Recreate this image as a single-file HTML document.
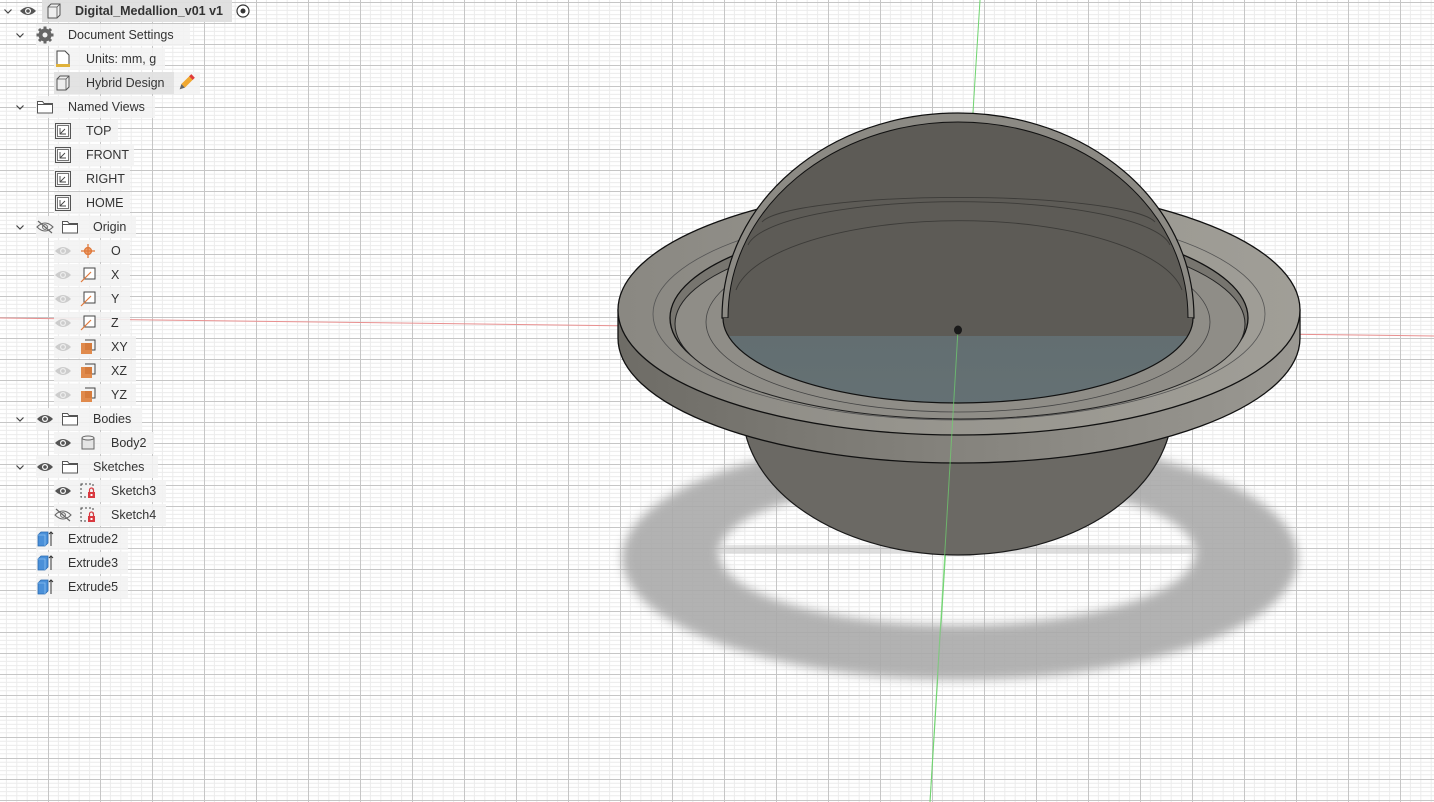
<!DOCTYPE html>
<html><head><meta charset="utf-8"><style>
html,body{margin:0;padding:0;width:1434px;height:802px;overflow:hidden;background:#fff;font-family:"Liberation Sans","DejaVu Sans",sans-serif}
#vp{position:absolute;left:0;top:0}
.r{position:absolute;height:22px;line-height:22px;font-size:12.5px;color:#333;white-space:nowrap}
.bg{position:absolute;height:22px;background:rgba(242,242,242,0.88)}
.ic{position:absolute}
</style></head><body>
<svg id="vp" width="1434" height="802" viewBox="0 0 1434 802">
<defs>
<pattern id="g" x="-4" y="2" width="52" height="21" patternUnits="userSpaceOnUse">
<rect width="52" height="21" fill="#fff"/>
<g stroke="#ececec" stroke-width="1">
<line x1="10.4" y1="0" x2="10.4" y2="21"/><line x1="20.8" y1="0" x2="20.8" y2="21"/><line x1="31.2" y1="0" x2="31.2" y2="21"/><line x1="41.6" y1="0" x2="41.6" y2="21"/>
<line x1="0" y1="4.2" x2="52" y2="4.2"/><line x1="0" y1="8.4" x2="52" y2="8.4"/><line x1="0" y1="12.6" x2="52" y2="12.6"/><line x1="0" y1="16.8" x2="52" y2="16.8"/>
</g>
<line x1="0.5" y1="0" x2="0.5" y2="21" stroke="#c6c6c6"/>
<line x1="0" y1="0.5" x2="52" y2="0.5" stroke="#c6c6c6"/>
</pattern>
<filter id="bl"><feGaussianBlur stdDeviation="5"/></filter>
<linearGradient id="side" x1="0" x2="1" y1="0" y2="0"><stop offset="0" stop-color="#6e6c66"/><stop offset=".5" stop-color="#85837d"/><stop offset="1" stop-color="#9a9892"/></linearGradient>
<linearGradient id="top" x1="0" x2="1" y1="0" y2="0"><stop offset="0" stop-color="#8a8882"/><stop offset=".5" stop-color="#98968f"/><stop offset="1" stop-color="#a09e97"/></linearGradient>
<linearGradient id="blu" x1="0" x2="0" y1="0" y2="1"><stop offset="0" stop-color="#5f5d58"/><stop offset=".2" stop-color="#627074"/><stop offset="1" stop-color="#66767b"/></linearGradient>
<clipPath id="low"><rect x="700" y="336" width="520" height="80"/></clipPath>
</defs>
<rect width="1434" height="802" fill="url(#g)"/>
<line x1="0" y1="318" x2="1434" y2="336" stroke="#e89090" stroke-width="1"/>
<line x1="980" y1="0" x2="930" y2="802" stroke="#6fd46f" stroke-width="1"/>
<!-- shadow -->
<path d="M622,558 A338,122 0 1 0 1298,558 A338,122 0 1 0 622,558 Z M719,553 A238,72 0 1 1 1195,553 A238,72 0 1 1 719,553 Z" fill="#aaa" fill-rule="evenodd" filter="url(#bl)" opacity=".9"/>
<rect x="720" y="546" width="475" height="7" fill="#c0c0c0" filter="url(#bl)"/>
<!-- bowl -->
<path d="M743,420 C752,500 850,555 958,555 C1068,555 1160,500 1172,420 Z" fill="#6b6964" stroke="#1a1a1a" stroke-width="1.2"/>
<!-- flange side -->
<path d="M618,310 L618,338 A341,125 0 0 0 1300,338 L1300,310 Z" fill="url(#side)" stroke="#111" stroke-width="1.3"/>
<ellipse cx="959" cy="310" rx="341" ry="125" fill="url(#top)" stroke="#111" stroke-width="1.3"/>
<ellipse cx="959" cy="314" rx="306" ry="106" fill="none" stroke="#555" stroke-width=".8"/>
<!-- recess -->
<ellipse cx="959" cy="318" rx="289" ry="100" fill="#77756f" stroke="#111" stroke-width="1.3"/>
<ellipse cx="960" cy="324" rx="285" ry="95" fill="#8f8d87" stroke="#222" stroke-width="1"/>
<ellipse cx="958" cy="322" rx="252" ry="90" fill="none" stroke="#444" stroke-width=".8"/>
<!-- dome -->
<path d="M722,318 C722,200 830,113 958,113 C1086,113 1194,200 1194,318 Z" fill="#8c8a84" stroke="#111" stroke-width="1.2"/>
<path d="M728,318 C728,205 835,122 958,122 C1082,122 1188,205 1188,318 L1193,318 A235,85 0 0 1 723,318 Z" fill="#5d5b56"/>
<ellipse cx="958" cy="318" rx="235" ry="85" fill="url(#blu)" clip-path="url(#low)" opacity=".8"/>
<path d="M728,318 C728,205 835,122 958,122 C1082,122 1188,205 1188,318" fill="none" stroke="#111" stroke-width="1"/>
<path d="M736,290 A225,80 0 0 1 1182,290" fill="none" stroke="#3c3b38" stroke-width=".9"/>
<path d="M748,245 A212,48 0 0 1 1170,245" fill="none" stroke="#3c3b38" stroke-width=".9"/>
<path d="M762,222 A198,28 0 0 1 1155,222" fill="none" stroke="#3c3b38" stroke-width=".9"/>
<path d="M723,318 A235,85 0 0 0 1193,318" fill="none" stroke="#111" stroke-width="1.2"/>
<line x1="958" y1="330" x2="930" y2="802" stroke="#6fd46f" stroke-width="1" opacity=".7"/>
<ellipse cx="958" cy="330" rx="4" ry="4.5" fill="#1a1a1a"/>
</svg>

<!-- tree panel -->
<div class="bg" style="left:42px;top:0;width:190px;background:rgba(222,222,222,.95)"></div>
<div class="bg" style="left:36px;top:24px;width:154px"></div>
<div class="bg" style="left:54px;top:48px;width:111px"></div>
<div class="bg" style="left:54px;top:72px;width:120px;background:rgba(226,226,226,.95)"></div>
<div class="bg" style="left:174px;top:72px;width:26px"></div>
<div class="bg" style="left:36px;top:96px;width:119px"></div>
<div class="bg" style="left:54px;top:120px;width:64px"></div>
<div class="bg" style="left:54px;top:144px;width:80px"></div>
<div class="bg" style="left:54px;top:168px;width:76px"></div>
<div class="bg" style="left:54px;top:192px;width:76px"></div>
<div class="bg" style="left:36px;top:216px;width:100px"></div>
<div class="bg" style="left:54px;top:240px;width:76px"></div>
<div class="bg" style="left:54px;top:264px;width:76px"></div>
<div class="bg" style="left:54px;top:288px;width:76px"></div>
<div class="bg" style="left:54px;top:312px;width:76px"></div>
<div class="bg" style="left:54px;top:336px;width:82px"></div>
<div class="bg" style="left:54px;top:360px;width:82px"></div>
<div class="bg" style="left:54px;top:384px;width:82px"></div>
<div class="bg" style="left:36px;top:408px;width:106px"></div>
<div class="bg" style="left:54px;top:432px;width:100px"></div>
<div class="bg" style="left:36px;top:456px;width:122px"></div>
<div class="bg" style="left:54px;top:480px;width:112px"></div>
<div class="bg" style="left:54px;top:504px;width:112px"></div>
<div class="bg" style="left:36px;top:528px;width:92px"></div>
<div class="bg" style="left:36px;top:552px;width:92px"></div>
<div class="bg" style="left:36px;top:576px;width:92px"></div>

<svg class="ic" style="left:0;top:0" width="260" height="600" viewBox="0 0 260 600">
<defs>
<g id="chev"><path d="M-3.5,-1.5 L0,2 L3.5,-1.5" fill="none" stroke="#444" stroke-width="1.2"/></g>
<g id="eye"><path d="M-8,0 Q0,-8 8,0 Q0,8 -8,0Z" fill="#555"/><circle r="3" fill="#fff"/><circle r="1.8" fill="#555"/></g>
<g id="eyef"><path d="M-8,0 Q0,-8 8,0 Q0,8 -8,0Z" fill="#ccc"/><circle r="3" fill="#eee"/><circle r="1.8" fill="#ccc"/></g>
<g id="eyes"><path d="M-8,0 Q0,-8 8,0 Q0,8 -8,0Z" fill="none" stroke="#666" stroke-width="1.1"/><circle r="2.4" fill="none" stroke="#666"/><line x1="-7" y1="-6" x2="7" y2="6" stroke="#666" stroke-width="1.2"/></g>
<g id="fold"><path d="M-7.5,-5.5 h5 l1.5,2 h8.5 v9.5 h-15z" fill="#fff" stroke="#555" stroke-width="1"/><line x1="-7.5" y1="-2.5" x2="7.5" y2="-2.5" stroke="#555"/></g>
<g id="view"><rect x="-7.5" y="-7.5" width="15" height="15" fill="#eee" stroke="#555"/><rect x="-5.5" y="-5.5" width="11" height="11" fill="#fff" stroke="#555" stroke-width=".8"/><path d="M-3,-3 V3 H3 M-3,3 L2,-2" fill="none" stroke="#444" stroke-width=".9"/></g>
<g id="box"><path d="M-6,-4 L-3,-7 H6 V4 L3,7 H-6Z" fill="#eee" stroke="#555" stroke-width="1"/><path d="M-6,-4 H3 V7 M3,-4 L6,-7" fill="none" stroke="#555" stroke-width=".8"/></g>
<g id="axis"><rect x="-4" y="-7" width="11" height="11" fill="#fff" stroke="#444" stroke-width="1"/><line x1="-7" y1="7" x2="3" y2="-3" stroke="#e07a3c" stroke-width="1.2"/></g>
<g id="plane"><path d="M-3,-7 H7 V3 H4" fill="none" stroke="#444" stroke-width="1"/><rect x="-7" y="-4" width="11" height="11" fill="#e08a4c"/><rect x="-3" y="-4" width="7" height="7" fill="#c96b2c" opacity=".5"/></g>
<g id="sk"><rect x="-7" y="-7" width="12" height="13" fill="none" stroke="#444" stroke-dasharray="2 2"/><rect x="0" y="1" width="7" height="6" fill="#d9383f"/><path d="M1.5,1 v-2 a2,2 0 0 1 4,0 v2" fill="none" stroke="#d9383f" stroke-width="1.2"/><rect x="2.5" y="3" width="2" height="2" fill="#fff"/></g>
<g id="ext"><path d="M-6,-4 L-3,-7 H4 V4 L1,7 H-6Z" fill="#4a90d9" stroke="#2a6ab0" stroke-width=".8"/><path d="M-6,-4 H1 V7" fill="none" stroke="#8bc0f0" stroke-width=".8"/><path d="M7,7 V-7 M5,-5 L7,-7 L9,-5" fill="none" stroke="#333" stroke-width="1"/></g>
</defs>
<use href="#chev" x="8" y="11"/><use href="#eye" x="28" y="11"/><use href="#box" x="54" y="11"/>
<circle cx="243" cy="11" r="6" fill="#fff" stroke="#333" stroke-width="1.2"/><circle cx="243" cy="11" r="2.5" fill="#333"/>
<use href="#chev" x="20" y="35"/>
<g transform="translate(45,35)"><circle r="6.5" fill="#666"/><g stroke="#666" stroke-width="3"><line x1="0" y1="-8.5" x2="0" y2="8.5"/><line x1="-8.5" y1="0" x2="8.5" y2="0"/><line x1="-6" y1="-6" x2="6" y2="6"/><line x1="-6" y1="6" x2="6" y2="-6"/></g><circle r="2.5" fill="#f2f2f2"/></g>
<g transform="translate(63,59)"><path d="M-6,-8 h8 l4,4 v10 h-12z" fill="#fff" stroke="#444"/><rect x="-7" y="5" width="14" height="3" fill="#e0b23a"/></g>
<use href="#box" x="63" y="83"/>
<g transform="translate(186,83) rotate(45)"><rect x="-2.5" y="-8" width="5" height="12" fill="#f0a830"/><rect x="-2.5" y="-10" width="5" height="3" fill="#e03a3a"/><path d="M-2.5,4 L0,9 L2.5,4Z" fill="#666"/></g>
<use href="#chev" x="20" y="107"/><use href="#fold" x="45" y="107"/>
<use href="#view" x="63" y="131"/><use href="#view" x="63" y="155"/><use href="#view" x="63" y="179"/><use href="#view" x="63" y="203"/>
<use href="#chev" x="20" y="227"/><use href="#eyes" x="45" y="227"/><use href="#fold" x="70" y="227"/>
<use href="#eyef" x="63" y="251"/>
<g transform="translate(88,251)" stroke="#e07a3c" fill="none" stroke-width="1.3"><circle r="3.5" fill="#e9a070"/><line x1="-7" y1="0" x2="7" y2="0"/><line x1="0" y1="-7" x2="0" y2="7"/></g>
<use href="#eyef" x="63" y="275"/><use href="#axis" x="88" y="275"/>
<use href="#eyef" x="63" y="299"/><use href="#axis" x="88" y="299"/>
<use href="#eyef" x="63" y="323"/><use href="#axis" x="88" y="323"/>
<use href="#eyef" x="63" y="347"/><use href="#plane" x="88" y="347"/>
<use href="#eyef" x="63" y="371"/><use href="#plane" x="88" y="371"/>
<use href="#eyef" x="63" y="395"/><use href="#plane" x="88" y="395"/>
<use href="#chev" x="20" y="419"/><use href="#eye" x="45" y="419"/><use href="#fold" x="70" y="419"/>
<use href="#eye" x="63" y="443"/>
<g transform="translate(88,443)"><rect x="-6" y="-5" width="12" height="11" fill="#e4e4e4" stroke="#666"/><ellipse cy="-5" rx="6" ry="2" fill="#f0f0f0" stroke="#666"/></g>
<use href="#chev" x="20" y="467"/><use href="#eye" x="45" y="467"/><use href="#fold" x="70" y="467"/>
<use href="#eye" x="63" y="491"/><use href="#sk" x="88" y="491"/>
<use href="#eyes" x="63" y="515"/><use href="#sk" x="88" y="515"/>
<use href="#ext" x="44" y="539"/><use href="#ext" x="44" y="563"/><use href="#ext" x="44" y="587"/>
</svg>

<div class="r" style="left:75px;top:0;font-weight:bold;color:#333">Digital_Medallion_v01 v1</div>
<div class="r" style="left:68px;top:24px">Document Settings</div>
<div class="r" style="left:86px;top:48px">Units: mm, g</div>
<div class="r" style="left:86px;top:72px">Hybrid Design</div>
<div class="r" style="left:68px;top:96px">Named Views</div>
<div class="r" style="left:86px;top:120px">TOP</div>
<div class="r" style="left:86px;top:144px">FRONT</div>
<div class="r" style="left:86px;top:168px">RIGHT</div>
<div class="r" style="left:86px;top:192px">HOME</div>
<div class="r" style="left:93px;top:216px">Origin</div>
<div class="r" style="left:111px;top:240px">O</div>
<div class="r" style="left:111px;top:264px">X</div>
<div class="r" style="left:111px;top:288px">Y</div>
<div class="r" style="left:111px;top:312px">Z</div>
<div class="r" style="left:111px;top:336px">XY</div>
<div class="r" style="left:111px;top:360px">XZ</div>
<div class="r" style="left:111px;top:384px">YZ</div>
<div class="r" style="left:93px;top:408px">Bodies</div>
<div class="r" style="left:111px;top:432px">Body2</div>
<div class="r" style="left:93px;top:456px">Sketches</div>
<div class="r" style="left:111px;top:480px">Sketch3</div>
<div class="r" style="left:111px;top:504px">Sketch4</div>
<div class="r" style="left:68px;top:528px">Extrude2</div>
<div class="r" style="left:68px;top:552px">Extrude3</div>
<div class="r" style="left:68px;top:576px">Extrude5</div>
</body></html>
